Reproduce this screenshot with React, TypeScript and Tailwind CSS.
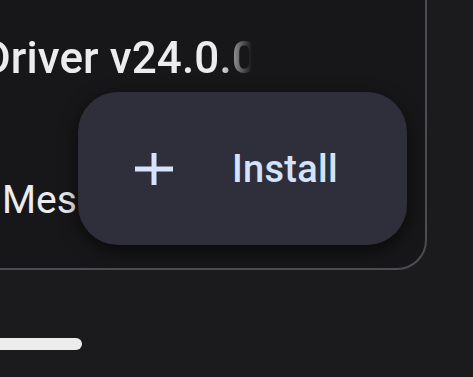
import React from "react";

const App = () => {
  return (
    <div className="w-[473px] h-[377px] overflow-hidden bg-[#1b1b1d] font-['Roboto',sans-serif] flex flex-col">
      <div className="relative -mt-[30px] -ml-[40px] w-[467px] h-[300px] shrink-0 rounded-[30px] border-2 border-[#4c4c51] bg-[#171719] pl-[40px] pt-[64px]">
        <div className="w-[270px] -ml-[20px] overflow-hidden whitespace-nowrap [mask-image:linear-gradient(to_right,black_88%,transparent_100%)]">
          <span className="text-[44px] leading-none font-medium text-[#ececee] tracking-[0.1px]">
            Driver v24.0.0
          </span>
        </div>
        <div className="mt-[101px] text-[39px] leading-none text-[#ececee]">
          Mes
        </div>

        <button className="absolute left-[116px] top-[120px] w-[329px] h-[153px] rounded-[40px] bg-[#2f2f3b] shadow-[0_6px_18px_rgba(0,0,0,0.6)] flex items-center pl-[56px] gap-[58px]">
          <svg width="40" height="40" viewBox="0 0 40 40" fill="none" stroke="#d6e3fb" strokeWidth="5">
            <path d="M20 4V36M1 20H39" />
          </svg>
          <span className="text-[38px] leading-none font-medium text-[#d3e3fd] tracking-[0.3px]">
            Install
          </span>
        </button>
      </div>

      <div className="mt-[68px] w-[82px] h-[12px] rounded-r-full bg-[#ececec]" />
    </div>
  );
};

export default App;
